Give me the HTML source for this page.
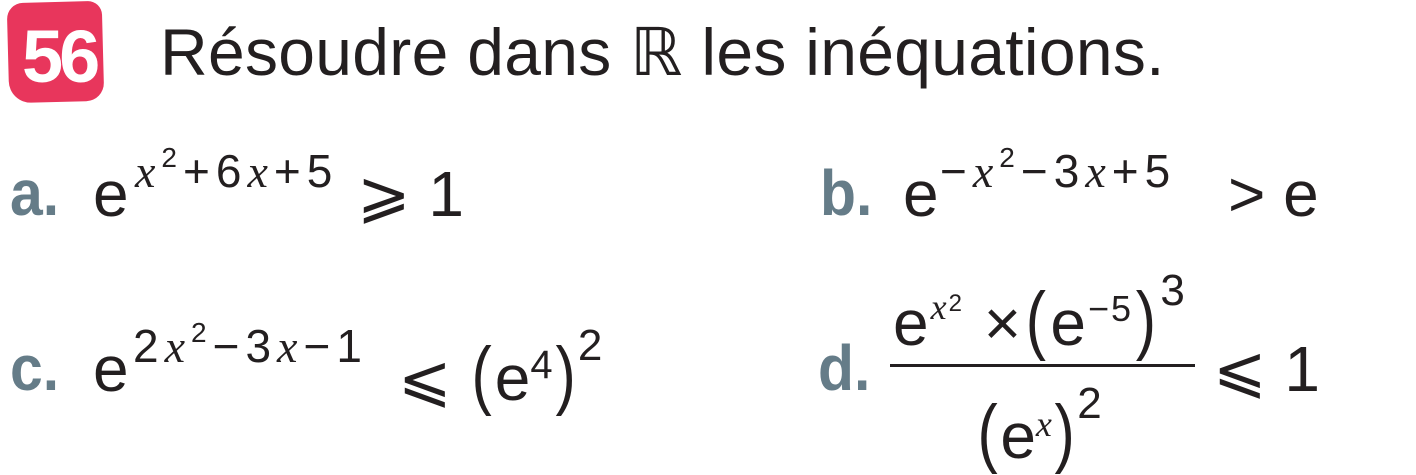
<!DOCTYPE html>
<html><head><meta charset="utf-8"><style>
body{margin:0;width:1416px;height:475px;background:#fff;position:relative;overflow:hidden;font-family:"Liberation Sans",sans-serif;color:#231f20}
.a{position:absolute;white-space:nowrap;line-height:1}
.lab{font-weight:bold;color:#657c88;font-size:64px;transform:scaleX(.92);transform-origin:left}
.e{font-size:64px}
.s{font-size:46px;letter-spacing:6px}
i{font-family:"Liberation Serif",serif;font-style:italic}
.q{font-size:28px;position:relative;top:-20px}
.pp{font-size:76px;font-weight:normal;transform:scaleX(.8);display:inline-block}
</style></head><body>
<div class="a" style="left:8px;top:2px;width:95px;height:100px;background:#e8365c;border-radius:16px 14px 18px 22px;transform:rotate(-1.5deg)"></div>
<div class="a" style="left:22px;top:20px;color:#fff;font-weight:bold;font-size:74px;letter-spacing:-4px">56</div>
<div class="a" style="left:160px;top:19px;font-size:66px;letter-spacing:0.3px">Résoudre dans ℝ les inéquations.</div>

<div class="a lab" style="left:10px;top:161px">a.</div>
<div class="a e" style="left:93px;top:162px">e</div>
<div class="a s" style="left:135px;top:148px"><i>x</i><span class="q">2</span>+6<i>x</i>+5</div>
<div class="a e" style="left:357px;top:162px">⩾ 1</div>

<div class="a lab" style="left:820px;top:161px">b.</div>
<div class="a e" style="left:903px;top:162px">e</div>
<div class="a s" style="left:940px;top:148px">−<i>x</i><span class="q">2</span>−3<i>x</i>+5</div>
<div class="a e" style="left:1228px;top:162px">&gt; e</div>

<div class="a lab" style="left:10px;top:336px">c.</div>
<div class="a e" style="left:93px;top:337px">e</div>
<div class="a s" style="left:133px;top:323px">2<i>x</i><span class="q">2</span>−3<i>x</i>−1</div>
<div class="a e" style="left:398px;top:337px">⩽ <span class="pp">(</span>e<span style="font-size:40px;position:relative;top:-22px">4</span><span class="pp">)</span><span style="font-size:44px;position:relative;top:-40px">2</span></div>

<div class="a lab" style="left:818px;top:336px">d.</div>
<div class="a e" style="left:893px;top:282px;letter-spacing:2px">e<span style="font-size:36px;position:relative;top:-26px"><i>x</i><span style="font-size:24px;position:relative;top:-8px">2</span></span> ×<span class="pp">(</span>e<span style="font-size:36px;position:relative;top:-24px">−5</span><span class="pp">)</span><span style="font-size:44px;position:relative;top:-40px">3</span></div>
<div class="a" style="left:890px;top:364px;width:305px;height:3px;background:#231f20"></div>
<div class="a e" style="left:975px;top:395px"><span class="pp">(</span>e<span style="font-size:36px;position:relative;top:-22px"><i>x</i></span><span class="pp">)</span><span style="font-size:44px;position:relative;top:-40px">2</span></div>
<div class="a e" style="left:1213px;top:337px">⩽ 1</div>
</body></html>
